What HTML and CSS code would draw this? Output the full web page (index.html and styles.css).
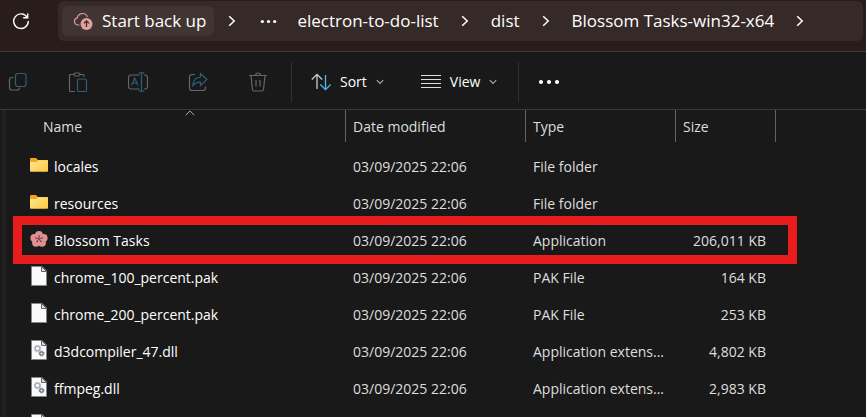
FILE: index.html
```html
<!DOCTYPE html>
<html lang="en">
<head>
<meta charset="utf-8">
<title>Blossom Tasks-win32-x64</title>
<link rel="stylesheet" href="styles.css">
</head>
<body>
<svg class="defs" aria-hidden="true">
  <symbol id="chevron" viewBox="0 0 8 12"><path d="M1.2 1.2 6.2 6 1.2 10.800" fill="none" stroke="currentColor" stroke-width="1.500"/></symbol>
  <symbol id="down" viewBox="0 0 8 6"><path d="M.8 1.2 4 4.4 7.2 1.2" fill="none" stroke="currentColor" stroke-width="1.1"/></symbol>
  <symbol id="dots" viewBox="0 0 22 6"><g fill="currentColor"><circle cx="3" cy="3" r="2.1"/><circle cx="11" cy="3" r="2.1"/><circle cx="19" cy="3" r="2.1"/></g></symbol>
  <symbol id="folder" viewBox="0 0 20 20">
    <path d="M1 4.2Q1 3 2.2 3H7l2 2h9q1 0 1 1v4H1z" fill="#f2a90f"/>
    <path d="M1 7h6.5L9 5.3h10V16q0 .8-.8.8H1.8Q1 16.800 1 16z" fill="url(#gold)"/>
  </symbol>
  <symbol id="file" viewBox="0 0 20 20">
    <path d="M2.500.5h10.500l4.500 4.500v14.500h-15z" fill="#fafafa" stroke="#858585"/>
    <path d="M12.500.5V5.500h5z" fill="#ddd" stroke="#666"/>
  </symbol>
  <symbol id="dll" viewBox="0 0 20 20">
    <use href="#file"/>
    <circle cx="8.500" cy="8.500" r="2.400" fill="none" stroke="#a3adb8" stroke-width="1.400"/>
    <circle cx="8.500" cy="8.500" r="3.300" fill="none" stroke="#a3adb8" stroke-width="1" stroke-dasharray="1.300 1.290"/>
    <circle cx="12.500" cy="13.500" r="1.700" fill="none" stroke="#66717c" stroke-width="1.300"/>
    <circle cx="12.500" cy="13.500" r="2.500" fill="none" stroke="#66717c" stroke-width="1" stroke-dasharray="1 .963"/>
  </symbol>
  <symbol id="blossom" viewBox="0 0 20 20">
    <g fill="#df9090"><circle cx="10" cy="5.800" r="3.900"/><circle cx="14.700" cy="8.900" r="3.900"/><circle cx="13" cy="13.800" r="3.900"/><circle cx="7" cy="13.800" r="3.900"/><circle cx="5.300" cy="8.900" r="3.900"/><circle cx="10" cy="10" r="4"/></g>
    <path d="M10 10V7.200M10 10l2.700-.9M10 10l1.700 2.300M10 10l-1.700 2.300M10 10l-2.700-.9" fill="none" stroke="#7a3a44" stroke-width=".9"/>
    <g fill="#4d242c"><circle cx="10" cy="7" r=".7"/><circle cx="13" cy="9" r=".7"/><circle cx="11.900" cy="12.500" r=".7"/><circle cx="8.100" cy="12.500" r=".7"/><circle cx="7" cy="9" r=".7"/></g>
  </symbol>
  <linearGradient id="gold" x1="0" y1="0" x2="1" y2="1"><stop offset="0" stop-color="#ffe69a"/><stop offset="1" stop-color="#ffc939"/></linearGradient>
</svg>

<header class="address">
  <button class="refresh" aria-label="Refresh">
    <svg viewBox="0 0 18 18" width="18" height="18" fill="none" stroke="currentColor" stroke-width="1.400"><path d="M15.300 5.500A7.300 7.300 0 1 0 16.300 9"/><path d="M15.700 1.500V5.700H11.200"/></svg>
  </button>
  <nav class="crumbs" aria-label="Path">
    <button class="backup">
      <svg viewBox="0 0 20 20" width="20" height="20"><path d="M6.500 14H4.600A3.600 3.600 0 0 1 4.300 6.900 5.300 5.300 0 0 1 14.500 6" fill="none" stroke="#d99a9a" stroke-width="1.200"/><circle cx="13.500" cy="13" r="6" fill="#e3a0a0"/><path d="M13.500 16V10M10.900 12.400l2.600-2.600 2.600 2.600" fill="none" stroke="#3d2b2b" stroke-width="1.300"/></svg>
      Start back up
    </button>
    <svg class="chevron"><use href="#chevron"/></svg>
    <button class="more" aria-label="More folders"><svg width="17" height="5"><use href="#dots"/></svg></button>
    <a href="#">electron-to-do-list</a>
    <svg class="chevron"><use href="#chevron"/></svg>
    <a href="#">dist</a>
    <svg class="chevron"><use href="#chevron"/></svg>
    <a href="#">Blossom Tasks-win32-x64</a>
    <svg class="chevron"><use href="#chevron"/></svg>
  </nav>
</header>

<div class="toolbar" role="toolbar" aria-label="Commands">
  <div class="group edit">
    <button aria-label="Copy" disabled><svg class="tool" viewBox="0 0 20 20"><path d="M5.500 5.500H4A2.500 2.500 0 0 0 1.500 8v7.500A2.500 2.500 0 0 0 4 18h5a2.500 2.500 0 0 0 2.500-2.500"/><rect class="blue" x="7.500" y="1.500" width="10.500" height="13" rx="2.500"/></svg></button>
    <button aria-label="Paste" disabled><svg class="tool" viewBox="0 0 20 20"><path d="M6 2.500H2.500Q1.500 2.500 1.500 3.500v15q0 1 1 1H7M12 2.500h3q1 0 1 1V5"/><rect x="6" y="1" width="6" height="3" rx="1.500"/><rect class="blue" x="9.500" y="7" width="9" height="12.500" rx="1.500"/></svg></button>
    <button aria-label="Rename" disabled><svg class="tool" viewBox="0 0 20 20"><path d="M11.500 3H3A2.500 2.500 0 0 0 .5 5.500v9A2.500 2.500 0 0 0 3 17h8.500M16 3h1a2.500 2.500 0 0 1 2.500 2.500v9A2.500 2.500 0 0 1 17 17h-1"/><path class="blue" d="M3.500 13.500 6.700 6l3.200 7.500M4.500 11h4.400M13.500 1v18M10.800.8h5.400M10.800 19.200h5.400"/></svg></button>
    <button aria-label="Share" disabled><svg class="tool" viewBox="0 0 20 20"><path d="M7 2.500H4A2.500 2.500 0 0 0 1.500 5v11A2.500 2.500 0 0 0 4 18.500h11A2.500 2.500 0 0 0 17.500 16v-1.500"/><path class="blue" d="M12.500 1.500 19 7.500l-6.500 6V10.200Q8 10 4.800 13.500 5.500 5.500 12.500 5z"/></svg></button>
    <button aria-label="Delete" disabled><svg class="tool" viewBox="0 0 20 20"><path d="M1 3.500h18M7.500 3.500a2.500 2.500 0 0 1 5 0M3 3.500l1.500 14q.2 1.500 1.500 1.500h8q1.300 0 1.500-1.500L17 3.500M8 8v6.500M12 8v6.500"/></svg></button>
  </div>
  <div class="group view">
    <button><svg viewBox="0 0 20 18" width="20" height="18" fill="none" stroke-width="1.300"><path d="M6 16V1.500M.8 6.500 6 1.300l5.200 5.200" stroke="#ccc"/><path d="M14.500 2v14.500M9.300 11.500l5.200 5.200 5.200-5.200" stroke="#4cb8f0"/></svg>Sort<svg class="down"><use href="#down"/></svg></button>
    <button><svg viewBox="0 0 20 14" width="20" height="14" stroke="#ddd" stroke-width="1"><path d="M0 .5h20M0 4.500h20M0 8.500h20M0 12.500h20"/></svg>View<svg class="down"><use href="#down"/></svg></button>
  </div>
  <div class="group">
    <button aria-label="See more"><svg width="22" height="6"><use href="#dots"/></svg></button>
  </div>
</div>

<main class="pane">
  <table class="files">
    <colgroup><col class="c-name"><col class="c-date"><col class="c-type"><col class="c-size"></colgroup>
    <thead>
      <tr><th class="sorted">Name<svg viewBox="0 0 10 6" width="10" height="6"><path d="M.7 5.200 5 .9l4.300 4.300" fill="none" stroke="#aaa"/></svg></th><th>Date modified</th><th>Type</th><th>Size</th></tr>
    </thead>
    <tbody>
      <tr><td><span class="name"><svg><use href="#folder"/></svg>locales</span></td><td>03/09/2025 22:06</td><td>File folder</td><td></td></tr>
      <tr><td><span class="name"><svg><use href="#folder"/></svg>resources</span></td><td>03/09/2025 22:06</td><td>File folder</td><td></td></tr>
      <tr class="marked"><td><span class="name"><svg><use href="#blossom"/></svg>Blossom Tasks</span></td><td>03/09/2025 22:06</td><td>Application</td><td>206,011 KB</td></tr>
      <tr><td><span class="name"><svg><use href="#file"/></svg>chrome_100_percent.pak</span></td><td>03/09/2025 22:06</td><td>PAK File</td><td>164 KB</td></tr>
      <tr><td><span class="name"><svg><use href="#file"/></svg>chrome_200_percent.pak</span></td><td>03/09/2025 22:06</td><td>PAK File</td><td>253 KB</td></tr>
      <tr><td><span class="name"><svg><use href="#dll"/></svg>d3dcompiler_47.dll</span></td><td>03/09/2025 22:06</td><td>Application extens...</td><td>4,802 KB</td></tr>
      <tr><td><span class="name"><svg><use href="#dll"/></svg>ffmpeg.dll</span></td><td>03/09/2025 22:06</td><td>Application extens...</td><td>2,983 KB</td></tr>
      <tr><td><span class="name"><svg><use href="#file"/></svg></span></td><td></td><td></td><td></td></tr>
    </tbody>
  </table>
</main>
</body>
</html>
```

FILE: styles.css
```css
* { box-sizing: border-box; }

body {
  margin: 0;
  height: 100vh;
  overflow: hidden;
  display: flex;
  flex-direction: column;
  background: #191919;
  color: #fff;
  font: 14px/20px "Segoe UI", "Open Sans", "Noto Sans", sans-serif;
}

.defs { position: absolute; width: 0; height: 0; }

svg { flex: none; }

button {
  display: flex;
  align-items: center;
  padding: 0;
  border: 0;
  background: none;
  color: inherit;
  font: inherit;
}

a { color: inherit; text-decoration: none; }

/* Address bar */
.address {
  flex: none;
  display: flex;
  padding: 1px 3px 10px 12px;
  background: #281d1b;
  border-bottom: 1px solid #413b3a;
}

.refresh { width: 46px; }

.crumbs {
  flex: 1;
  display: flex;
  align-items: center;
  height: 40px;
  padding-left: 4px;
  border-radius: 6px;
  background: #352a28;
  font-size: 17px;
  white-space: nowrap;
}

.backup {
  gap: 9px;
  height: 30px;
  padding: 0 8px 0 11px;
  border-radius: 6px;
  background: #413534;
}

.chevron { width: 8px; height: 12px; margin: 0 22px; }
.backup + .chevron { margin: 0 24px 0 14px; }
.more { margin-right: 20px; }

/* Command bar */
.toolbar {
  flex: none;
  display: flex;
  height: 58px;
  padding: 10px 8px 7px;
  border-bottom: 1px solid #3a3a3a;
}

.group { display: flex; padding-right: 21px; }
.group + .group { padding-left: 19px; border-left: 1px solid #303030; }
.group.edit { gap: 40px; padding-right: 23px; }
.view { gap: 37px; }
.view button { gap: 9px; }

.tool { width: 20px; height: 20px; fill: none; stroke: #666; stroke-width: 1.2; }
.tool .blue { stroke: #2a607c; }
.down { width: 8px; height: 6px; color: #aaa; }

/* File list */
.pane {
  flex: 1;
  min-height: 0;
  overflow: hidden;
  margin-left: 2px;
  border-left: 4px solid #202020;
}

.files {
  width: 770px;
  table-layout: fixed;
  border-collapse: separate;
  border-spacing: 0;
  color: #dedede;
}

.c-name { width: 340px; }
.c-date { width: 180px; }
.c-type { width: 150px; }
.c-size { width: 100px; }

th {
  height: 32px;
  padding: 2px 7px 0;
  border-right: 1px solid #636363;
  font-weight: 400;
  text-align: left;
}

th:first-child { padding-left: 37px; }

.sorted { position: relative; }
.sorted svg { position: absolute; top: 0; left: 179px; }

tbody::before { content: ""; display: block; height: 6px; }

td {
  height: 37px;
  padding: 0 7px;
  white-space: nowrap;
}

td:first-child { padding-left: 23px; color: #fff; }
td:last-child { padding-right: 10px; text-align: right; }

.name { display: flex; align-items: center; gap: 5px; }
.name svg { width: 20px; height: 20px; margin-bottom: 3px; }

.marked { position: relative; }

.marked::after {
  content: "";
  position: absolute;
  inset: -6px -21px -5px 7px;
  border: 9px solid #e81c1c;
}
```
